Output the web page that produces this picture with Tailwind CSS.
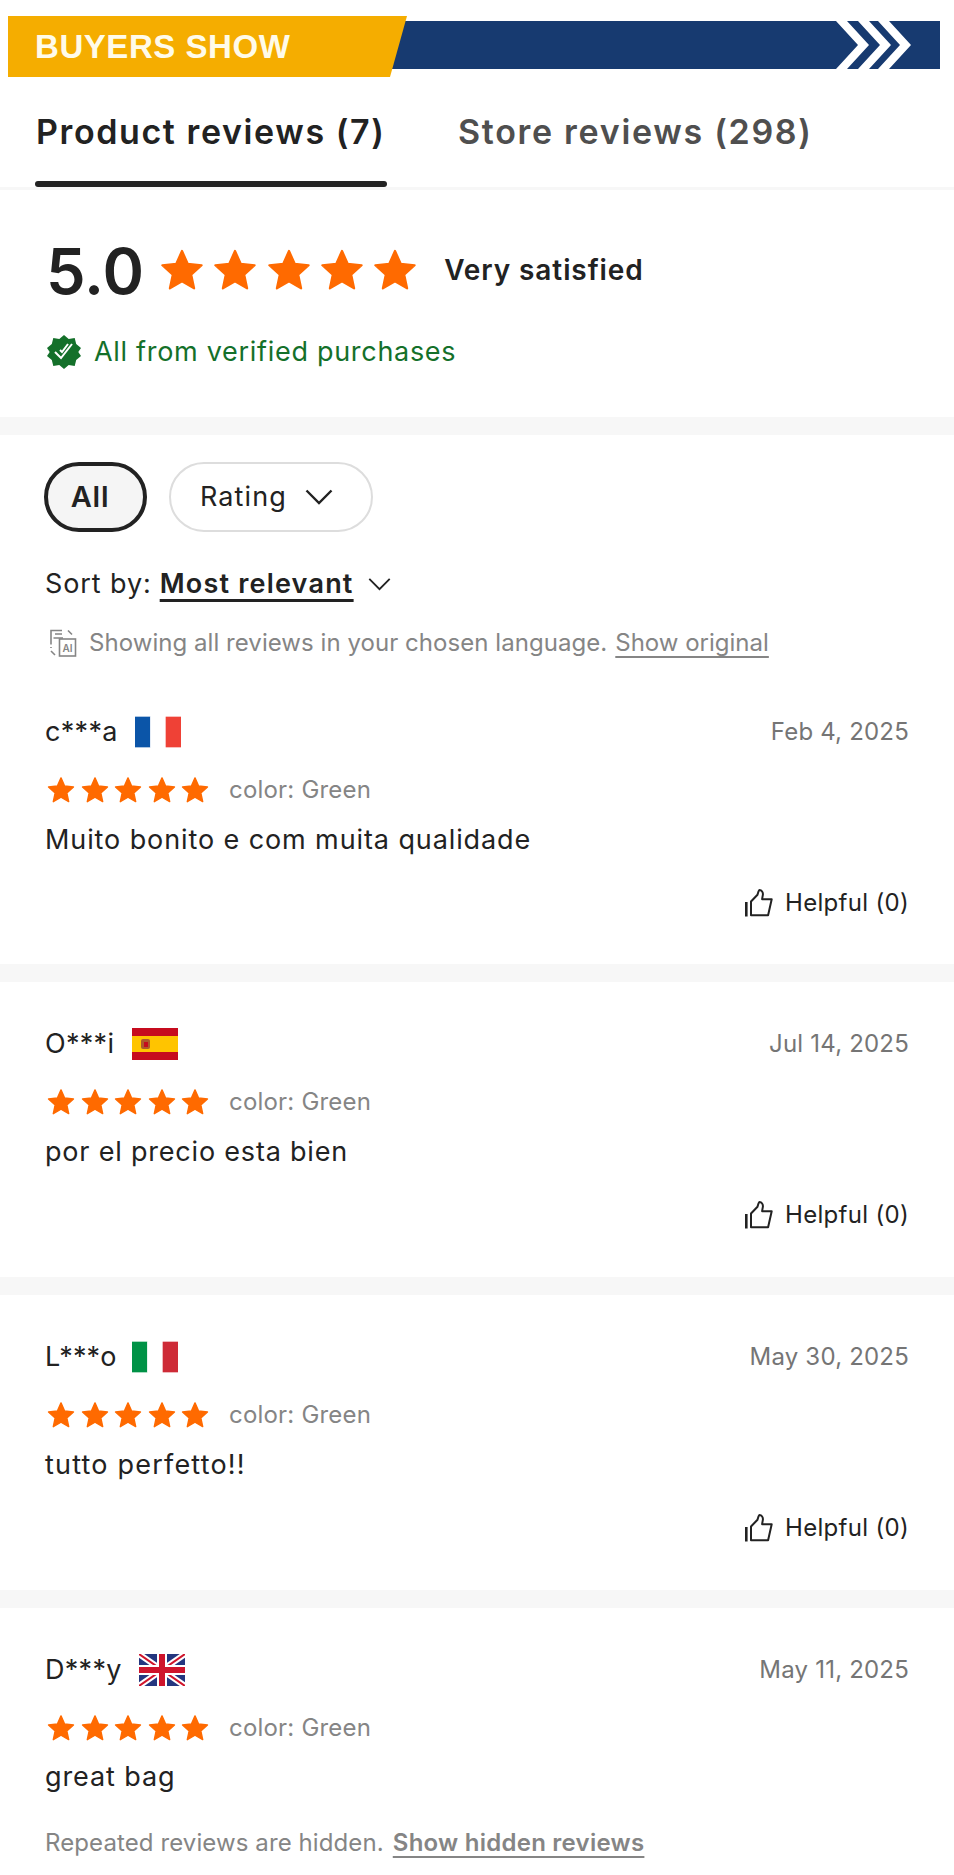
<!DOCTYPE html>
<html lang="en">
  <head>
    <meta charset="UTF-8" />
    <meta name="viewport" content="width=device-width, initial-scale=1.0" />
    <script src="https://cdn.jsdelivr.net/npm/@tailwindcss/browser@4"></script>
    <title>Buyers show</title>
  </head>
  <body class="bg-white text-[#222] font-['Inter',sans-serif] overflow-hidden">
    <!-- shared icons -->
    <svg class="hidden">
      <symbol id="star" viewBox="0 0 24 24">
        <path fill="#ff6a00" stroke="#ff6a00" stroke-width="1.2" stroke-linejoin="round" d="M12 1.6l3.1 7 7.6.8-5.7 5.1 1.6 7.5L12 18.2l-6.6 3.8L7 14.5 1.3 9.4l7.6-.8z" />
      </symbol>
      <symbol id="thumb" viewBox="0 0 30 30">
        <path fill="none" stroke="#222" stroke-width="2" stroke-linejoin="round" d="M7 13.5l6.5-6.8c.5-1.7.8-3.4 1.8-4.7 2.6.2 3.8 2.2 3.6 4.6l-.8 4.6h9.6l-3.6 16H7z" />
        <path fill="none" stroke="#222" stroke-width="2.6" d="M2.3 14v14.5" />
      </symbol>
    </svg>

    <!-- banner -->
    <header class="pt-4 pl-2 pr-[14px]">
      <div class="relative h-[61px] flex items-center">
        <svg class="absolute inset-0 w-full h-full" viewBox="0 0 932 61" preserveAspectRatio="none">
          <rect x="370" y="5" width="562" height="48" fill="#173a70" />
          <path d="M828 5h11l22 24-22 24h-11l22-24zM850 5h11l22 24-22 24h-11l22-24zM870 5h11l22 24-22 24h-11l22-24z" fill="#fff" />
          <path d="M374 61l5-8 10-48-6 0-9 56z" fill="#3a3420" />
          <path d="M0 0h399l-17 61H0z" fill="#f5ad00" />
        </svg>
        <span class="relative ml-[27px] font-['Liberation_Sans',sans-serif] font-bold text-[33px] tracking-[0.55px] text-[#fffbe9]">BUYERS SHOW</span>
      </div>
    </header>

    <!-- tabs -->
    <nav class="flex h-[113px] border-b-[3px] border-[#f7f7f7]">
      <div class="ml-[35px] w-[352px] flex flex-col">
        <span class="mt-[33px] h-[44px] leading-[44px] pl-px text-[34px] font-semibold tracking-[1.6px] whitespace-nowrap">Product reviews (7)</span>
        <span class="mt-[27px] h-[6px] rounded-full bg-[#222]"></span>
      </div>
      <span class="ml-[71px] mt-[33px] h-[44px] leading-[44px] text-[34px] font-semibold tracking-[1.7px] text-[#4f4f4f] whitespace-nowrap">Store reviews (298)</span>
    </nav>

    <!-- rating summary -->
    <section class="h-[227px] pl-[47px]">
      <div class="pt-[50px] flex items-center h-[110px]">
        <span class="-ml-px w-[113px] pt-px text-[63px] leading-[60px] font-semibold">5.0</span>
        <div class="flex gap-[9.3px] ml-[1px]">
          <svg class="w-[44px] h-[44px]"><use href="#star" /></svg>
          <svg class="w-[44px] h-[44px]"><use href="#star" /></svg>
          <svg class="w-[44px] h-[44px]"><use href="#star" /></svg>
          <svg class="w-[44px] h-[44px]"><use href="#star" /></svg>
          <svg class="w-[44px] h-[44px]"><use href="#star" /></svg>
        </div>
        <span class="ml-[27px] text-[28px] font-semibold tracking-[0.9px]">Very satisfied</span>
      </div>
      <div class="mt-[35px] h-[34px] flex items-center">
        <svg class="w-[34px] h-[34px]" viewBox="0 0 34 34">
          <path fill="#14702a" d="M17 0l4.7 4 6-1 1.5 6 4.8 4-2.7 4 2.7 4-4.8 4-1.5 6-6-1L17 34l-4.7-4-6 1-1.5-6L0 21l2.7-4L0 13l4.8-4 1.5-6 6 1z" />
          <path fill="none" stroke="#fff" stroke-width="2" d="M8 17l6 6 11-14M13 15l2 2 6-8" />
        </svg>
        <span class="ml-[13px] text-[27px] tracking-[0.7px] text-[#14702a]">All from verified purchases</span>
      </div>
    </section>

    <div class="h-[18px] bg-[#f7f7f7]"></div>

    <!-- filters -->
    <section class="px-[45px]">
      <div class="pt-[27px] flex gap-[22px] -ml-px">
        <button class="w-[103px] h-[70px] pr-[11px] pb-px rounded-[35px] border-4 border-[#222] bg-[#f5f5f5] text-[29px] font-semibold tracking-[0.8px]">All</button>
        <button class="w-[204px] h-[70px] rounded-[35px] border-2 border-[#ddd] flex items-center pl-[29px] text-[27px] tracking-[1.1px]">
          Rating
          <svg class="ml-[18px] w-[28px] h-[16px]" viewBox="0 0 28 16"><path fill="none" stroke="#222" stroke-width="2.4" d="M1.5 1.5L14 14 26.5 1.5" /></svg>
        </button>
      </div>
      <div class="mt-[32px] h-[40px] flex items-center text-[27px]">
        <span class="tracking-[0.9px]">Sort by:</span>
        <span class="ml-[8px] font-semibold tracking-[1.2px] underline underline-offset-[6px] decoration-[3px]">Most relevant</span>
        <svg class="ml-[14px] w-[23px] h-[13px]" viewBox="0 0 24 14"><path fill="none" stroke="#222" stroke-width="2" d="M1 1l11 11L23 1" /></svg>
      </div>
      <div class="mt-[24px] h-[30px] flex items-center text-[24px] text-[#858585]">
        <svg class="ml-[4px] w-[28px] h-[28px]" viewBox="0 0 28 28">
          <path fill="none" stroke="#858585" stroke-width="1.6" d="M13 1.5H2v14M2 18v1M6 5h7M4.5 9H9M9 9h5M19 1.5l4 4M2 22l4 4" />
          <rect x="10.5" y="10" width="16" height="17" fill="#fff" stroke="#858585" stroke-width="1.6" />
          <text x="18.5" y="23" font-size="10" font-weight="600" fill="#858585" text-anchor="middle" font-family="Inter">AI</text>
        </svg>
        <span class="ml-[12px] tracking-[0.05px]">Showing all reviews in your chosen language.</span>
        <span class="ml-[8px] underline underline-offset-[5px]">Show original</span>
      </div>
    </section>

    <!-- review 1 -->
    <article class="mt-[58px] h-[248px] px-[45px]">
      <div class="h-[32px] flex items-center text-[27px]">
        <span class="tracking-[0.3px]">c***a</span>
        <svg class="ml-[17px] w-[46px] h-[32px]" viewBox="0 0 3 2"><rect width="1" height="2" fill="#0b55a8" /><rect x="1" width="1" height="2" fill="#fff" /><rect x="2" width="1" height="2" fill="#ef4136" /></svg>
        <span class="ml-auto text-[24px] tracking-[0.2px] text-[#757575]">Feb 4, 2025</span>
      </div>
      <div class="mt-[27px] h-[30px] flex items-center">
        <div class="flex gap-[5.5px] ml-[2px]">
          <svg class="w-[28px] h-[28px]"><use href="#star" /></svg>
          <svg class="w-[28px] h-[28px]"><use href="#star" /></svg>
          <svg class="w-[28px] h-[28px]"><use href="#star" /></svg>
          <svg class="w-[28px] h-[28px]"><use href="#star" /></svg>
          <svg class="w-[28px] h-[28px]"><use href="#star" /></svg>
        </div>
        <span class="ml-[20px] text-[24px] tracking-[0.2px] text-[#858585]">color: Green</span>
      </div>
      <p class="mt-[17px] h-[36px] leading-[36px] text-[27px] tracking-[0.9px]">Muito bonito e com muita qualidade</p>
      <div class="mt-[30px] h-[30px] flex items-center justify-end text-[24px] tracking-[0.3px]">
        <svg class="w-[30px] h-[30px]"><use href="#thumb" /></svg>
        <span class="ml-[11px]">Helpful (0)</span>
      </div>
    </article>

    <div class="h-[18px] bg-[#f7f7f7]"></div>

    <!-- review 2 -->
    <article class="h-[295px] pt-[46px] px-[45px]">
      <div class="h-[32px] flex items-center text-[27px]">
        <span class="tracking-[0.3px]">O***i</span>
        <svg class="ml-[18px] w-[46px] h-[32px]" viewBox="0 0 46 32">
          <rect width="46" height="32" fill="#c60b1e" />
          <rect y="8" width="46" height="16" fill="#ffc400" />
          <rect x="9" y="11" width="9" height="10" rx="2" fill="#ad5a2a" />
          <rect x="12" y="14" width="4" height="5" fill="#c60b1e" />
        </svg>
        <span class="ml-auto text-[24px] tracking-[0.2px] text-[#757575]">Jul 14, 2025</span>
      </div>
      <div class="mt-[27px] h-[30px] flex items-center">
        <div class="flex gap-[5.5px] ml-[2px]">
          <svg class="w-[28px] h-[28px]"><use href="#star" /></svg>
          <svg class="w-[28px] h-[28px]"><use href="#star" /></svg>
          <svg class="w-[28px] h-[28px]"><use href="#star" /></svg>
          <svg class="w-[28px] h-[28px]"><use href="#star" /></svg>
          <svg class="w-[28px] h-[28px]"><use href="#star" /></svg>
        </div>
        <span class="ml-[20px] text-[24px] tracking-[0.2px] text-[#858585]">color: Green</span>
      </div>
      <p class="mt-[17px] h-[36px] leading-[36px] text-[27px] tracking-[0.8px]">por el precio esta bien</p>
      <div class="mt-[30px] h-[30px] flex items-center justify-end text-[24px] tracking-[0.3px]">
        <svg class="w-[30px] h-[30px]"><use href="#thumb" /></svg>
        <span class="ml-[11px]">Helpful (0)</span>
      </div>
    </article>

    <div class="h-[18px] bg-[#f7f7f7]"></div>

    <!-- review 3 -->
    <article class="h-[295px] pt-[46px] px-[45px]">
      <div class="h-[32px] flex items-center text-[27px]">
        <span class="tracking-[0.1px]">L***o</span>
        <svg class="ml-[16px] w-[46px] h-[32px]" viewBox="0 0 3 2"><rect width="1" height="2" fill="#009246" /><rect x="1" width="1" height="2" fill="#fff" /><rect x="2" width="1" height="2" fill="#ce2b37" /></svg>
        <span class="ml-auto text-[24px] tracking-[0.2px] text-[#757575]">May 30, 2025</span>
      </div>
      <div class="mt-[27px] h-[30px] flex items-center">
        <div class="flex gap-[5.5px] ml-[2px]">
          <svg class="w-[28px] h-[28px]"><use href="#star" /></svg>
          <svg class="w-[28px] h-[28px]"><use href="#star" /></svg>
          <svg class="w-[28px] h-[28px]"><use href="#star" /></svg>
          <svg class="w-[28px] h-[28px]"><use href="#star" /></svg>
          <svg class="w-[28px] h-[28px]"><use href="#star" /></svg>
        </div>
        <span class="ml-[20px] text-[24px] tracking-[0.2px] text-[#858585]">color: Green</span>
      </div>
      <p class="mt-[17px] h-[36px] leading-[36px] text-[27px] tracking-[1.2px]">tutto perfetto!!</p>
      <div class="mt-[30px] h-[30px] flex items-center justify-end text-[24px] tracking-[0.3px]">
        <svg class="w-[30px] h-[30px]"><use href="#thumb" /></svg>
        <span class="ml-[11px]">Helpful (0)</span>
      </div>
    </article>

    <div class="h-[18px] bg-[#f7f7f7]"></div>

    <!-- review 4 -->
    <article class="pt-[46px] px-[45px]">
      <div class="h-[32px] flex items-center text-[27px]">
        <span class="tracking-[0.3px]">D***y</span>
        <svg class="ml-[17px] w-[46px] h-[32px]" viewBox="0 0 46 32">
          <rect width="46" height="32" fill="#24367f" />
          <path d="M0 0l46 32M46 0L0 32" stroke="#fff" stroke-width="6" />
          <path d="M0 0l46 32M46 0L0 32" stroke="#cf142b" stroke-width="2" />
          <path d="M23 0v32M0 16h46" stroke="#fff" stroke-width="10" />
          <path d="M23 0v32M0 16h46" stroke="#cf142b" stroke-width="6" />
        </svg>
        <span class="ml-auto text-[24px] tracking-[0.2px] text-[#757575]">May 11, 2025</span>
      </div>
      <div class="mt-[27px] h-[30px] flex items-center">
        <div class="flex gap-[5.5px] ml-[2px]">
          <svg class="w-[28px] h-[28px]"><use href="#star" /></svg>
          <svg class="w-[28px] h-[28px]"><use href="#star" /></svg>
          <svg class="w-[28px] h-[28px]"><use href="#star" /></svg>
          <svg class="w-[28px] h-[28px]"><use href="#star" /></svg>
          <svg class="w-[28px] h-[28px]"><use href="#star" /></svg>
        </div>
        <span class="ml-[20px] text-[24px] tracking-[0.2px] text-[#858585]">color: Green</span>
      </div>
      <p class="mt-[16px] h-[36px] leading-[36px] text-[27px] tracking-[0.9px]">great bag</p>
      <div class="mt-[33px] h-[30px] flex items-center text-[24px] text-[#858585]">
        <span class="tracking-[0.1px]">Repeated reviews are hidden.</span>
        <span class="ml-[9px] font-semibold tracking-[0.25px] underline underline-offset-[5px] decoration-2">Show hidden reviews</span>
      </div>
    </article>
  </body>
</html>
